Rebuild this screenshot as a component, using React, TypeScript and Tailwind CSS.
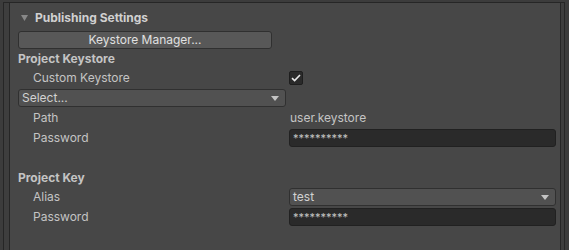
import React from 'react';

const font = { fontFamily: 'Inter, "Noto Sans", sans-serif' };

function Arrow() {
  return (
    <svg width="8" height="5" viewBox="0 0 8 5" className="shrink-0">
      <path d="M0 0 H8 L4 5 Z" fill="#c4c4c4" />
    </svg>
  );
}

function Dropdown({ value, className }: { value: string; className: string }) {
  return (
    <div
      className={`h-[18px] flex items-center justify-between pl-[3px] pr-[6px] rounded-[3px] border border-[#303030] bg-[#515151] text-[12px] text-[#d2d2d2] ${className}`}
    >
      <span>{value}</span>
      <Arrow />
    </div>
  );
}

function PasswordField({ className }: { className: string }) {
  return (
    <div
      className={`h-[18px] flex items-center pl-[3px] rounded-[3px] border border-[#212121] bg-[#2a2a2a] text-[11px] text-[#c4c4c4] ${className}`}
    >
      **********
    </div>
  );
}

function Row({ label, className, children }: { label: string; className: string; children?: React.ReactNode }) {
  return (
    <div className={`h-[18px] flex items-center ${className}`}>
      <div className="w-[271px] pl-[15px] text-[12px] text-[#c4c4c4] shrink-0">{label}</div>
      <div className="flex-1 flex items-center">{children}</div>
    </div>
  );
}

export default function App() {
  return (
    <div className="w-[569px] h-[250px] bg-[#3c3c3c] pt-[2px] overflow-hidden" style={font}>
      <div className="ml-[3px] w-[562px] h-[260px] border-l border-r border-t border-[#262626] bg-[#3e3e3e] pl-[5px] pr-[3px]">
        <div className="h-full border-l border-r border-[#262626] bg-[#474747] pl-[8px] pr-[4px] pt-[6px]">
          {/* Foldout header */}
          <div className="h-[18px] flex items-center gap-[7px] pl-[3px]">
            <svg width="7" height="6" viewBox="0 0 7 6">
              <path d="M0 0 H7 L3.5 6 Z" fill="#888888" />
            </svg>
            <span className="text-[12px] font-bold text-[#d0d0d0]">Publishing Settings</span>
          </div>

          <button className="mt-[4px] w-[254px] h-[18px] flex items-center justify-center rounded-[3px] border border-[#303030] bg-[#585858] text-[12px] text-[#e0e0e0]">
            Keystore Manager...
          </button>

          <div className="mt-[1px] h-[18px] flex items-center text-[12px] font-bold text-[#c4c4c4]">Project Keystore</div>

          <Row label="Custom Keystore" className="mt-[1px]">
            <div className="w-[14px] h-[14px] rounded-[2px] border border-[#1e1e1e] bg-[#2a2a2a] flex items-center justify-center">
              <svg width="10" height="8" viewBox="0 0 10 8">
                <path d="M1 4.2 L3.6 6.6 L9 1" stroke="#e8e8e8" strokeWidth="1.6" fill="none" />
              </svg>
            </div>
          </Row>

          <Dropdown value="Select..." className="mt-[2px] w-[268px]" />

          <Row label="Path" className="mt-[2px]">
            <span className="text-[12px] text-[#c4c4c4] pl-[1px]">user.keystore</span>
          </Row>

          <Row label="Password" className="mt-[2px]">
            <PasswordField className="w-[267px]" />
          </Row>

          <div className="mt-[22px] h-[18px] flex items-center text-[12px] font-bold text-[#c4c4c4]">Project Key</div>

          <Row label="Alias" className="mt-[1px]">
            <Dropdown value="test" className="w-[267px]" />
          </Row>

          <Row label="Password" className="mt-[2px]">
            <PasswordField className="w-[267px]" />
          </Row>
        </div>
      </div>
    </div>
  );
}
